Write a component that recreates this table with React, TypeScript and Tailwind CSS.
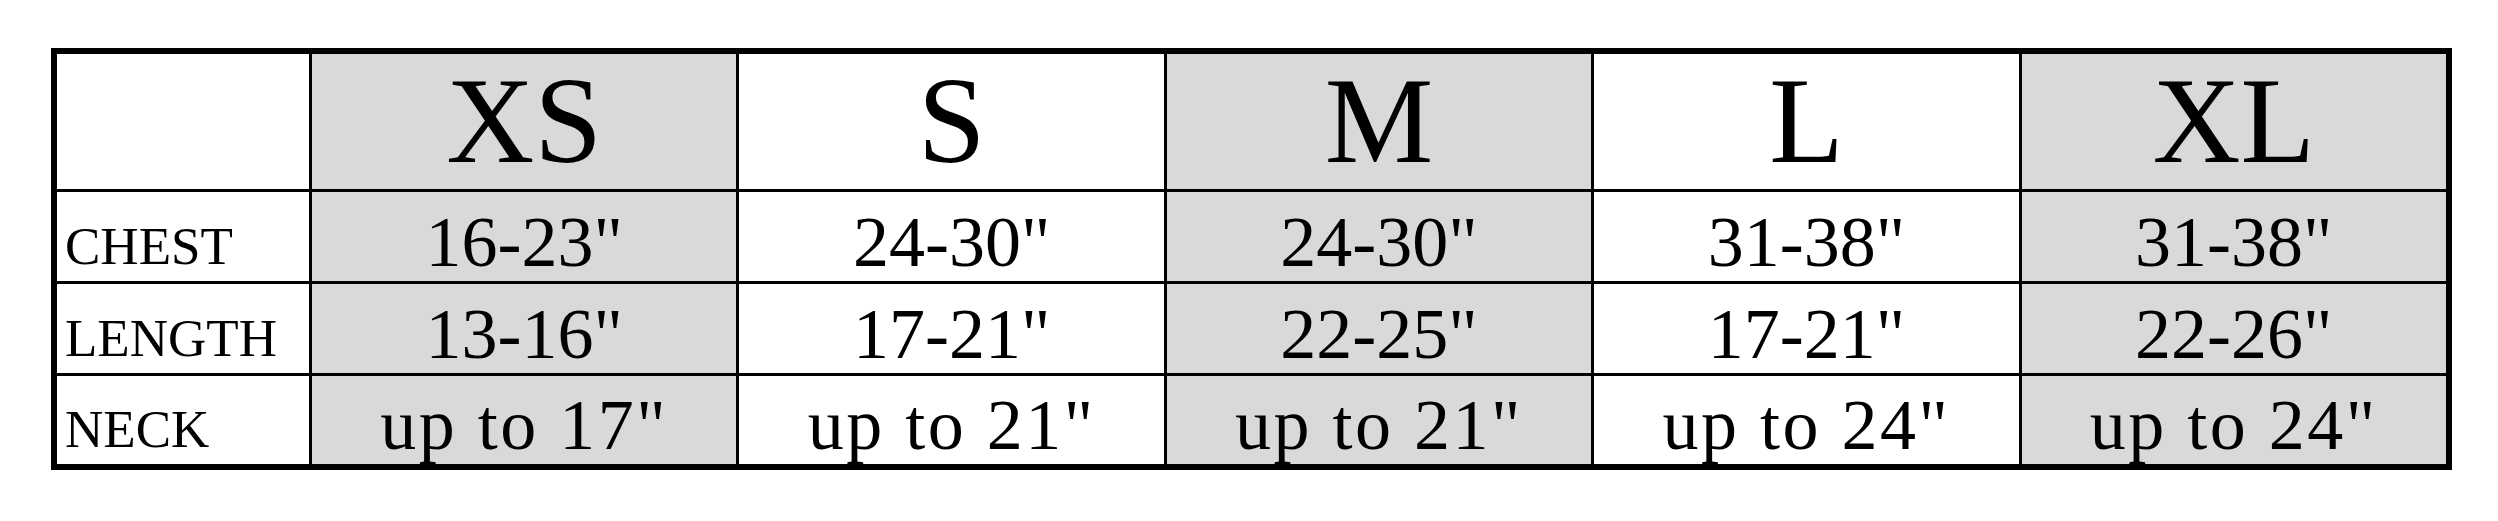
const sizes = ["XS", "S", "M", "L", "XL"];

const rows = [
  { label: "CHEST", values: ['16-23"', '24-30"', '24-30"', '31-38"', '31-38"'], wide: false },
  { label: "LENGTH", values: ['13-16"', '17-21"', '22-25"', '17-21"', '22-26"'], wide: false },
  { label: "NECK", values: ['up to 17"', 'up to 21"', 'up to 21"', 'up to 24"', 'up to 24"'], wide: true },
];

// alternate columns are shaded grey, starting with XS
const shade = (i: number) => (i % 2 === 0 ? "bg-[#d9d9d9]" : "bg-white");

export default function App() {
  return (
    <div className="w-[2498px] h-[521px] bg-white pl-[51px] pt-[48px] font-['Liberation_Serif',serif] text-black">
      <div className="w-[2401px] border-[6px] border-black bg-black">
        <div className="grid grid-cols-[252px_repeat(5,1fr)] grid-rows-[135px_89px_89px_88px] gap-[3px]">
          <div className="bg-white" />
          {sizes.map((s, i) => (
            <div
              key={s}
              className={`${shade(i)} flex items-end justify-center pb-[7px] text-[122px] leading-none`}
            >
              {s}
            </div>
          ))}

          {rows.map((row) => (
            <>
              <div
                key={row.label}
                className="bg-white flex items-end pl-[8px] pb-[8px] text-[53px] leading-none"
              >
                {row.label}
              </div>
              {row.values.map((v, i) => (
                <div
                  key={row.label + i}
                  className={`${shade(i)} flex items-end justify-center pb-[3px] text-[72px] leading-none ${
                    row.wide ? "tracking-[2.5px]" : ""
                  }`}
                >
                  {v}
                </div>
              ))}
            </>
          ))}
        </div>
      </div>
    </div>
  );
}
